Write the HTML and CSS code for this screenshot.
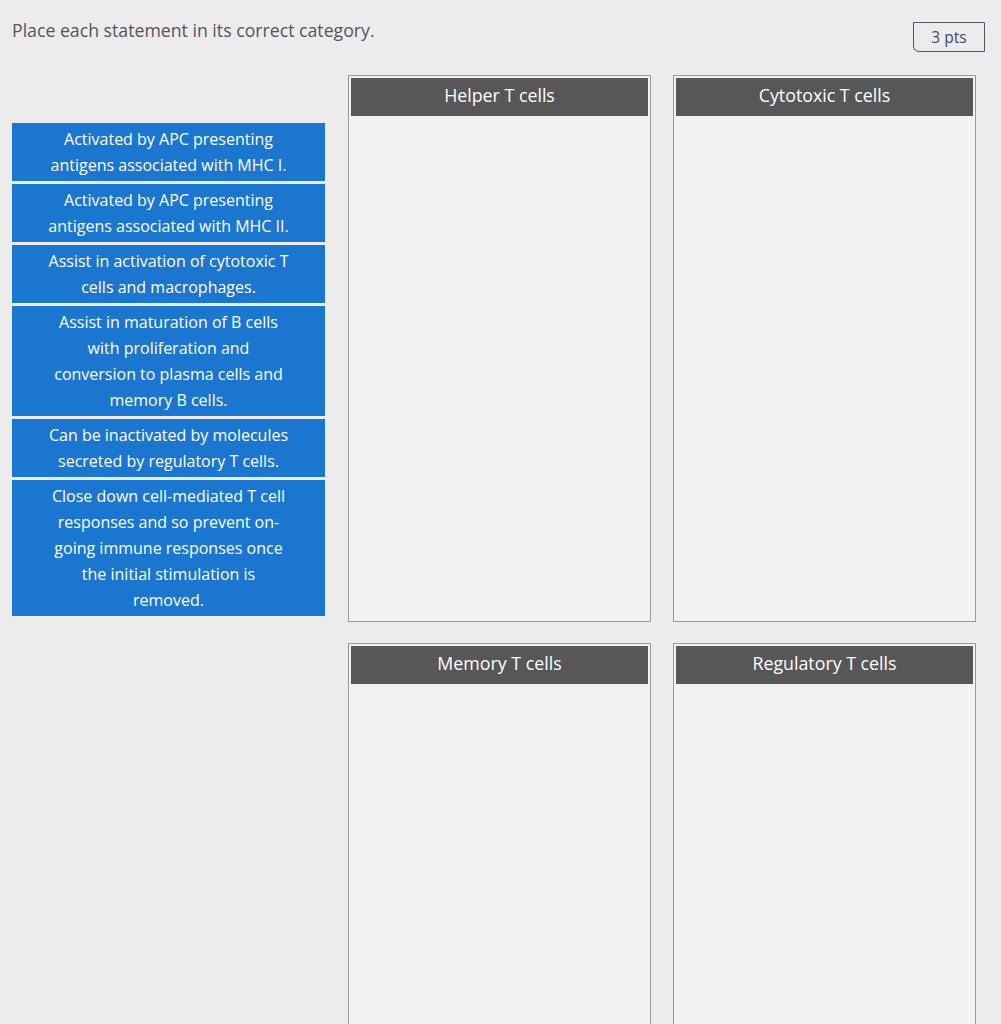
FILE: index.html
```html
<!DOCTYPE html>
<html lang="en">
<head>
  <meta charset="utf-8">
  <title>Categorize statements</title>
  <link rel="stylesheet" href="styles.css">
</head>
<body>
  <div class="question">
    <header class="question-head">
      <p class="prompt">Place each statement in its correct category.</p>
      <span class="points">3 pts</span>
    </header>

    <div class="workspace">
      <!-- statements waiting to be dragged -->
      <div class="pool">
        <div class="chip">Activated by APC presenting antigens associated with MHC I.</div>
        <div class="chip">Activated by APC presenting antigens associated with MHC II.</div>
        <div class="chip">Assist in activation of cytotoxic T cells and macrophages.</div>
        <div class="chip">Assist in maturation of B cells with proliferation and conversion to plasma cells and memory B cells.</div>
        <div class="chip">Can be inactivated by molecules secreted by regulatory T cells.</div>
        <div class="chip">Close down cell-mediated T cell responses and so prevent on-going immune responses once the initial stimulation is removed.</div>
      </div>

      <!-- drop targets -->
      <div class="bins">
        <div class="bin">
          <div class="bin-title">Helper T cells</div>
        </div>
        <div class="bin">
          <div class="bin-title">Cytotoxic T cells</div>
        </div>
        <div class="bin">
          <div class="bin-title">Memory T cells</div>
        </div>
        <div class="bin">
          <div class="bin-title">Regulatory T cells</div>
        </div>
      </div>
    </div>
  </div>
</body>
</html>
```

FILE: styles.css
```css
html, body {
  margin: 0;
  background: #ececec;
}

body {
  font-family: "Open Sans", "Liberation Sans", sans-serif;
  color: #555;
}

.question {
  padding: 18px 25px 0 12px;
}

.question-head {
  display: flex;
  justify-content: space-between;
  align-items: flex-start;
}

.prompt {
  margin: 0;
  font-size: 17.7px;
  line-height: 24px;
}

.points {
  margin-top: 4px;
  margin-right: -9px;
  width: 70px;
  height: 28px;
  border: 1px solid #4d5670;
  border-radius: 0 0 0 6px;
  color: #3f4a68;
  font-size: 15.5px;
  line-height: 28px;
  text-align: center;
}

.workspace {
  display: flex;
  gap: 23px;
  margin-top: 23px;
}

.pool {
  flex: 0 0 313px;
  display: flex;
  flex-direction: column;
  gap: 3px;
  padding-top: 48px;
}

.chip {
  background: #1b76d0;
  color: #fff;
  font-size: 16px;
  line-height: 26px;
  text-align: center;
  padding: 3px 34px;
}

.bins {
  flex: 1;
  display: grid;
  grid-template-columns: 1fr 1fr;
  grid-auto-rows: 547px;
  gap: 21px 22px;
}

.bin {
  border: 1px solid #9a9a9a;
  background: #f2f2f2;
  padding: 2px;
}

.bin-title {
  background: #575757;
  color: #fff;
  font-size: 17.8px;
  line-height: 34px;
  padding-bottom: 4px;
  text-align: center;
}
```
